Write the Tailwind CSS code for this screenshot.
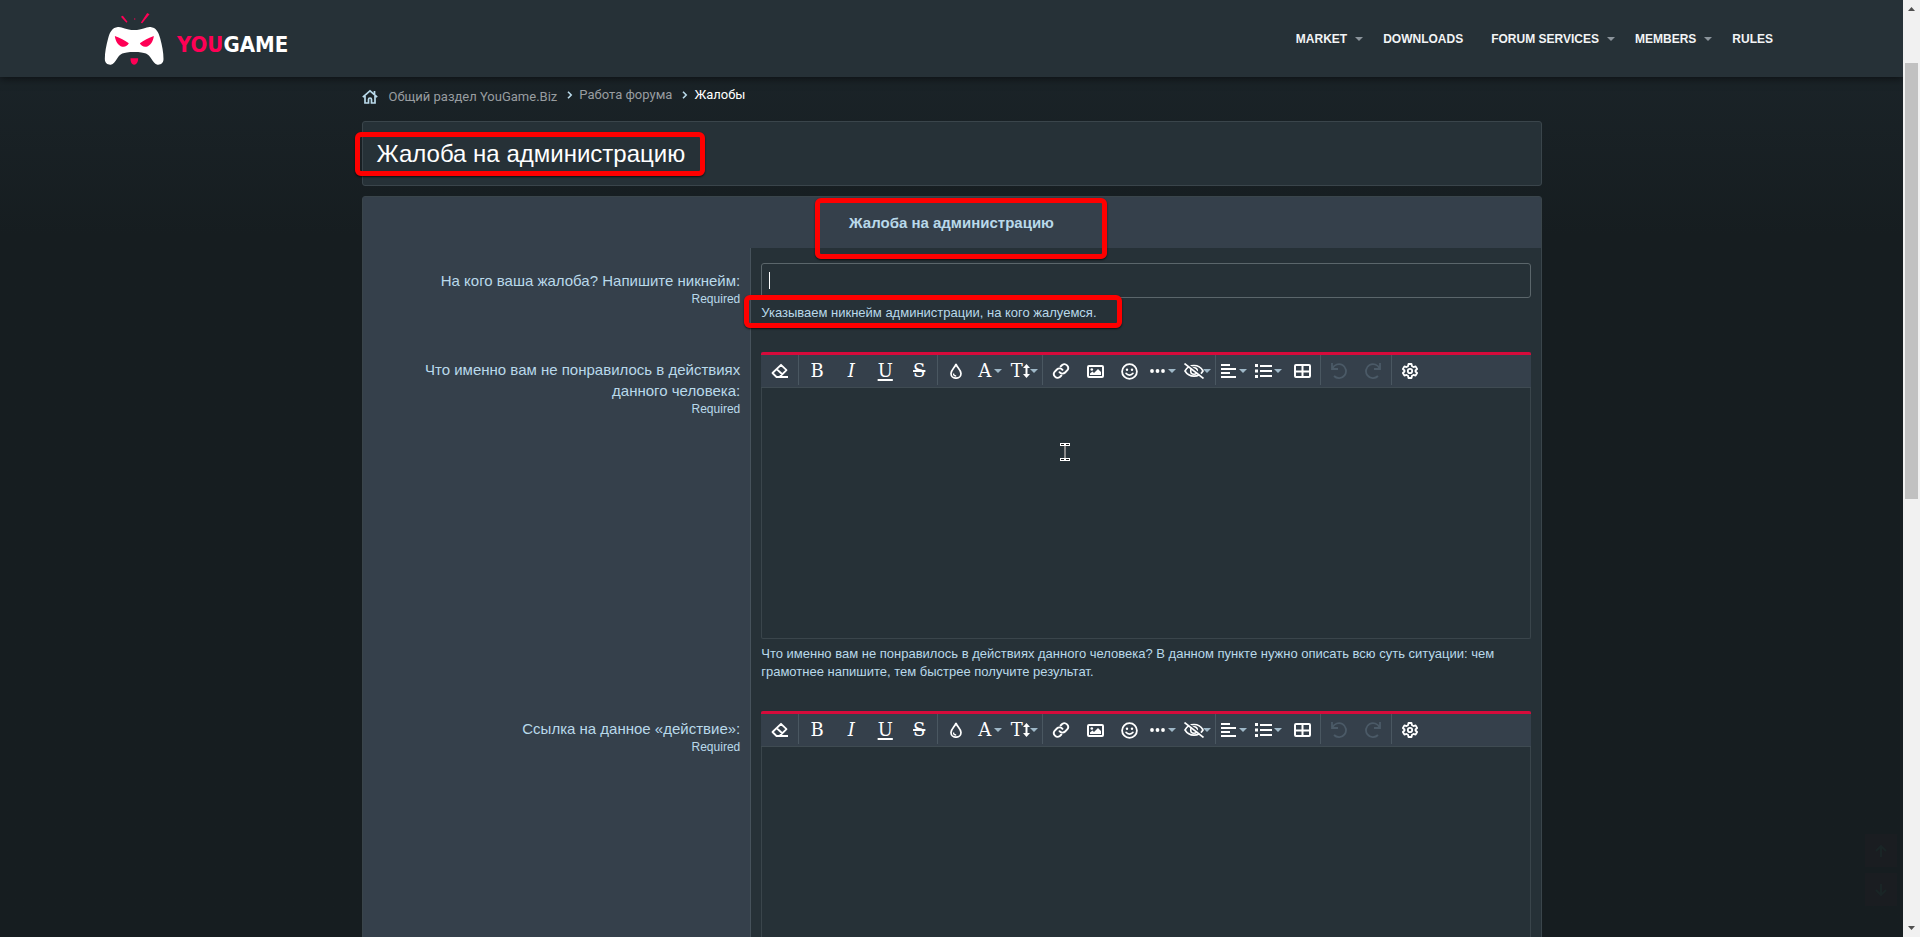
<!DOCTYPE html>
<html lang="ru">
<head>
    <meta charset="UTF-8">
    <meta name="viewport" content="width=device-width, initial-scale=1.0">
    <title>Жалоба на администрацию | YouGame.Biz</title>
    <script src="https://cdn.jsdelivr.net/npm/@tailwindcss/browser@4"></script>
</head>
<body class="flex h-screen overflow-hidden bg-[#161d20] font-['Liberation_Sans',Arial,sans-serif] text-[#b9d9ea]">

    <div class="relative flex-1 h-screen overflow-hidden bg-linear-to-b from-[#1b2429] from-5% to-[#161d20] to-25%">

        <!-- Header -->
        <header class="relative flex items-center justify-between h-[77px] pl-[103px] pr-[120px] bg-[#263137] shadow-[0_2px_8px_rgba(0,0,0,0.5)]">
            <a href="#" class="flex items-center gap-3" aria-label="YouGame">
                <svg class="w-[62px] h-[55px]" viewBox="40 30 185 165">
                    <path fill="#fff" d="M84 78C96 76 106 87 133 87S170 76 182 78C198 80 206 92 211 112C217 134 221 155 221 174C221 187 212 192 203 191C195 190 190 182 183 171C176 160 168 153 133 153S90 160 83 171C76 182 71 190 63 191C54 192 45 187 45 174C45 155 49 134 55 112C60 92 68 80 84 78Z"/>
                    <path fill="#ff0055" d="M75 105C90 110 106 118 117 127C113 135 105 139 97 137C85 134 77 121 75 105ZM192 105C177 110 161 118 150 127C154 135 162 139 170 137C182 134 190 121 192 105ZM122 172H145C145 181 142 191 133 191S122 181 122 172ZM93 47L99 44L113 62L110 65ZM172 36L179 40L157 67L153 65ZM132 54L136 51L136 57Z"/>
                </svg>
                <span class="pt-3 text-[22px] leading-[30px] font-bold font-['Liberation_Sans_Narrow','DejaVu_Sans_Condensed',sans-serif] text-white"><span class="text-[#ff0055]">YOU</span>GAME</span>
            </a>
            <nav class="flex items-center pt-px text-xs font-bold text-[#f2f4f5]">
                <a href="#" class="flex items-center gap-2 px-[10px]">MARKET <svg class="w-2 h-1" viewBox="0 0 8 4"><path fill="#8b949b" d="M0 0h8L4 4z"/></svg></a>
                <a href="#" class="pl-[10px] pr-[18px]">DOWNLOADS</a>
                <a href="#" class="flex items-center gap-2 px-[10px]">FORUM SERVICES <svg class="w-2 h-1" viewBox="0 0 8 4"><path fill="#8b949b" d="M0 0h8L4 4z"/></svg></a>
                <a href="#" class="flex items-center gap-2 px-[10px]">MEMBERS <svg class="w-2 h-1" viewBox="0 0 8 4"><path fill="#8b949b" d="M0 0h8L4 4z"/></svg></a>
                <a href="#" class="px-[10px]">RULES</a>
            </nav>
        </header>

        <main class="w-full max-w-[1180px] mx-auto">

            <!-- Breadcrumbs -->
            <nav class="flex items-center h-[44px] pb-2 font-[Roboto,sans-serif] text-[13px] text-[#989da0]">
                <a href="#" class="flex items-center gap-[11px] pt-1">
                    <svg class="w-4 h-4" viewBox="0 0 16 16" fill="none" stroke="#b9d9ea" stroke-width="1.7"><path d="M.8 8.2L8 1.8l7.200 6.400M12.500 2v3.500M3 7v7h3.500v-3.500a1.500 1.500 0 0 1 3 0V14H13V7"/></svg>
                    Общий раздел YouGame.Biz
                </a>
                <svg class="w-[22px] h-2" viewBox="0 0 22 8" fill="none" stroke="#b9d9ea" stroke-width="1.600"><path d="M11 .8L14.200 4L11 7.200"/></svg>
                <a href="#">Работа форума</a>
                <svg class="w-[22px] h-2" viewBox="0 0 22 8" fill="none" stroke="#b9d9ea" stroke-width="1.600"><path d="M11 .8L14.200 4L11 7.200"/></svg>
                <a href="#" class="text-white">Жалобы</a>
            </nav>

            <!-- Page title -->
            <div class="relative h-[65px] px-[14px] pt-4 border border-[#3a454b] rounded-[3px] bg-[#263137]">
                <h1 class="text-2xl text-white">Жалоба на администрацию</h1>
                <div class="absolute -left-2 top-[10px] w-[350px] h-[44px] border-5 border-[#ff0000] rounded-md shadow-[0_1px_2px_rgba(0,0,0,0.7)]"></div>
            </div>

            <!-- Complaint form -->
            <form class="mt-[10px] border border-[#3a454b] rounded-[3px] bg-[#263137]">
                <div class="relative h-[51px] pt-[15px] bg-[#35404b] text-center">
                    <h2 class="text-[15px] leading-[21px] font-bold">Жалоба на администрацию</h2>
                    <div class="absolute left-[452px] top-px w-[292px] h-[61px] border-5 border-[#ff0000] rounded-md shadow-[0_1px_2px_rgba(0,0,0,0.7)]"></div>
                </div>

                <div class="flex">
                    <div class="w-[33%] pt-[22px] pr-[10px] pl-10 bg-[#35404b] border-r border-[#46525b] text-right">
                        <label for="nickname" class="block text-[15px] leading-[21px]">На кого ваша жалоба? Напишите никнейм:</label>
                        <p class="text-xs">Required</p>
                    </div>
                    <div class="relative flex-1 px-[10px] pt-[15px] pb-[15px]">
                        <div class="relative">
                            <input id="nickname" type="text" class="block w-full h-[35px] px-2 border border-[#5b666b] rounded-[3px] bg-transparent text-[15px] text-white outline-none">
                            <span class="absolute left-2 top-[9px] w-px h-[17px] bg-white"></span>
                        </div>
                        <p class="mt-[6px] text-[13px] leading-[18px]">Указываем никнейм администрации, на кого жалуемся.</p>
                        <div class="absolute -left-[7px] top-[47px] w-[378px] h-[33px] border-5 border-[#ff0000] rounded-md shadow-[0_1px_2px_rgba(0,0,0,0.7)]"></div>
                    </div>
                </div>

                <div class="flex">
                    <div class="w-[33%] pt-[22px] pr-[10px] pl-10 bg-[#35404b] border-r border-[#46525b] text-right">
                        <label for="reason" class="block text-[15px] leading-[21px]">Что именно вам не понравилось в действиях данного человека:</label>
                        <p class="text-xs">Required</p>
                    </div>
                    <div class="flex-1 px-[10px] pt-[15px] pb-[15px]">
                        <div class="relative h-[287px] flex flex-col border border-t-0 border-[#3a454b] rounded-[2px]">
                            <div data-toolbar></div>
                            <textarea id="reason" class="flex-1 w-full p-2 resize-none bg-transparent text-[15px] text-white outline-none"></textarea>
                            <!-- Text cursor -->
                            <svg class="absolute left-[297px] top-[90px] w-3 h-[20px]" viewBox="0 0 12 20">
                                <path fill="#8a8a8a" d="M5 3h2v14H5z"/>
                                <path fill="#fff" d="M1 1h10v3H1zM1 16h10v3H1z"/>
                                <path fill="#111" d="M2 2h3v1H2zM7 2h3v1H7zM2 17h3v1H2zM7 17h3v1H7z"/>
                            </svg>
                        </div>
                        <p class="mt-[6px] text-[13px] leading-[18px]">Что именно вам не понравилось в действиях данного человека? В данном пункте нужно описать всю суть ситуации: чем грамотнее напишите, тем быстрее получите результат.</p>
                    </div>
                </div>

                <div class="flex">
                    <div class="w-[33%] pt-[22px] pr-[10px] pl-10 bg-[#35404b] border-r border-[#46525b] text-right">
                        <label for="link" class="block text-[15px] leading-[21px]">Ссылка на данное «действие»:</label>
                        <p class="text-xs">Required</p>
                    </div>
                    <div class="flex-1 px-[10px] pt-[15px] pb-[15px]">
                        <div class="h-[287px] flex flex-col border border-t-0 border-[#3a454b] rounded-[2px]">
                            <div data-toolbar></div>
                            <textarea id="link" class="flex-1 w-full p-2 resize-none bg-transparent text-[15px] text-white outline-none"></textarea>
                        </div>
                    </div>
                </div>
            </form>
        </main>

        <!-- Scroll to top / bottom -->
        <div class="absolute right-[6px] bottom-[31px] flex flex-col gap-[6px]">
            <button type="button" aria-label="Top" class="flex items-center justify-center w-8 h-[33px] bg-[#1a1d21]">
                <svg class="w-3 h-3" viewBox="0 0 12 12" fill="none" stroke="#1a2526" stroke-width="2"><path d="M6 12V1M1 6l5-5 5 5"/></svg>
            </button>
            <button type="button" aria-label="Bottom" class="flex items-center justify-center w-8 h-[33px] bg-[#1a1d21]">
                <svg class="w-3 h-3" viewBox="0 0 12 12" fill="none" stroke="#1a2526" stroke-width="2"><path d="M6 0v11M1 6l5 5 5-5"/></svg>
            </button>
        </div>
    </div>

    <!-- Scrollbar -->
    <div class="flex flex-col items-center justify-between w-[17px] h-screen py-[7px] bg-[#f1f1f1]">
        <svg class="w-[7px] h-1" viewBox="0 0 7 4"><path fill="#505050" d="M0 4h7L3.500 0z"/></svg>
        <div class="w-[13px] h-[436px] mt-[52px] mb-auto bg-[#c1c1c1]"></div>
        <svg class="w-[7px] h-1" viewBox="0 0 7 4"><path fill="#505050" d="M0 0h7L3.500 4z"/></svg>
    </div>

    <!-- Editor toolbar, shared by all the editors -->
    <template id="toolbar">
        <div class="-mx-px flex h-[36px] px-px border-t-3 border-t-[#d60b3b] border-b border-b-[#3f4b52] rounded-t-[2px] bg-[#35404b] text-white font-['DejaVu_Serif',serif] text-[18px] leading-[28px]">
            <div class="flex px-px pt-[2px] mb-[2px] border-r border-[#4a5761]">
                <button type="button" aria-label="Remove formatting" class="flex items-center justify-center w-[34px]">
                    <svg class="w-[18px] h-4" viewBox="0 0 18 16" fill="none" stroke="currentColor" stroke-width="1.800" stroke-linejoin="round"><path d="M17 14H5.500L1.500 10L10 1.800L15.500 7.200L8.500 14M5.500 6L11.500 11.500"/></svg>
                </button>
            </div>
            <div class="flex px-px pt-[2px] mb-[2px] border-r border-[#4a5761]">
                <button type="button" aria-label="Bold" class="w-[34px]">B</button>
                <button type="button" aria-label="Italic" class="w-[34px] italic">I</button>
                <button type="button" aria-label="Underline" class="w-[34px] underline underline-offset-2 decoration-2">U</button>
                <button type="button" aria-label="Strike" class="w-[34px] line-through decoration-2">S</button>
            </div>
            <div class="flex px-px pt-[2px] mb-[2px] border-r border-[#4a5761]">
                <button type="button" aria-label="Text color" class="flex items-center justify-center w-[34px]">
                    <svg class="w-3 h-4" viewBox="0 0 12 16" fill="none" stroke="currentColor" stroke-width="1.700"><path d="M6 1C5.500 4 1 7 1 10.500a5 4.700 0 0 0 10 0C11 7 6.500 4 6 1Z"/><path d="M3.500 10.500c0 1.500 1 2.500 2.700 2.500" stroke-width="1.300"/></svg>
                </button>
                <button type="button" aria-label="Font family" class="flex items-center justify-center gap-[3px] w-[34px]">A<svg class="w-2 h-1 shrink-0" viewBox="0 0 8 4"><path fill="#9fb8c8" d="M0 0h8L4 4z"/></svg></button>
                <button type="button" aria-label="Font size" class="flex items-center justify-center w-[34px]">T<svg class="w-[7px] h-4 shrink-0" viewBox="0 0 7 16"><path fill="currentColor" d="M3.500 1L7 5H4.500v6H7L3.500 15L0 11h2.500V5H0z"/></svg><svg class="w-2 h-1 shrink-0" viewBox="0 0 8 4"><path fill="#9fb8c8" d="M0 0h8L4 4z"/></svg></button>
            </div>
            <div class="flex px-px pt-[2px] mb-[2px] border-r border-[#4a5761]">
                <button type="button" aria-label="Insert link" class="flex items-center justify-center w-[34px]">
                    <svg class="w-[18px] h-[18px]" viewBox="0 0 24 24" fill="none" stroke="currentColor" stroke-width="2.500" stroke-linecap="round"><path d="M10 13.500a5 5 0 0 0 7.500.5l3-3a5 5 0 0 0-7-7L11.500 6"/><path d="M14 10.500a5 5 0 0 0-7.500-.5l-3 3a5 5 0 0 0 7 7l2-2"/></svg>
                </button>
                <button type="button" aria-label="Insert image" class="flex items-center justify-center w-[34px]">
                    <svg class="w-[17px] h-[13px]" viewBox="0 0 17 13"><rect x="1" y="1" width="15" height="11" rx="1" fill="none" stroke="currentColor" stroke-width="2"/><circle cx="4.800" cy="4.500" r="1.300" fill="currentColor"/><path fill="currentColor" d="M3 10V8.500L5.500 6.500L7 8L11 4L14 7V10Z"/></svg>
                </button>
                <button type="button" aria-label="Smilies" class="flex items-center justify-center w-[34px]">
                    <svg class="w-[17px] h-[17px]" viewBox="0 0 17 17"><circle cx="8.500" cy="8.500" r="7.400" fill="none" stroke="currentColor" stroke-width="1.800"/><circle cx="6" cy="6.800" r="1.200" fill="currentColor"/><circle cx="11" cy="6.800" r="1.200" fill="currentColor"/><path d="M5 10.300c1.700 2.400 5.300 2.400 7 0" fill="none" stroke="currentColor" stroke-width="1.600" stroke-linecap="round"/></svg>
                </button>
                <button type="button" aria-label="Insert" class="flex items-center justify-center gap-[3px] w-[34px]">
                    <svg class="w-[15px] h-1" viewBox="0 0 15 4" fill="currentColor"><circle cx="2" cy="2" r="1.900"/><circle cx="7.500" cy="2" r="1.900"/><circle cx="13" cy="2" r="1.900"/></svg>
                    <svg class="w-2 h-1" viewBox="0 0 8 4"><path fill="#9fb8c8" d="M0 0h8L4 4z"/></svg>
                </button>
                <button type="button" aria-label="Spoiler" class="flex items-center justify-center w-[34px]">
                    <svg class="w-[20px] h-4 shrink-0" viewBox="0 0 20 16" fill="none" stroke="currentColor" stroke-width="1.600"><path d="M1 8c4-7.300 14-7.300 18 0c-4 6.800-14 6.800-18 0Z"/><circle cx="10" cy="8" r="3.300"/><path stroke="#35404b" d="M2.500 .5L20 14"/><path d="M.5 .5L19.500 15.500"/></svg>
                    <svg class="-ml-px w-2 h-1 shrink-0" viewBox="0 0 8 4"><path fill="#9fb8c8" d="M0 0h8L4 4z"/></svg>
                </button>
            </div>
            <div class="flex px-px pt-[2px] mb-[2px] border-r border-[#4a5761]">
                <button type="button" aria-label="Align" class="flex items-center justify-center gap-[3px] w-[34px]">
                    <svg class="w-[15px] h-[14px]" viewBox="0 0 15 14" fill="currentColor"><path d="M0 0h9v2H0zM0 4h15v2H0zM0 8h9v2H0zM0 12h15v2H0z"/></svg>
                    <svg class="w-2 h-1" viewBox="0 0 8 4"><path fill="#9fb8c8" d="M0 0h8L4 4z"/></svg>
                </button>
                <button type="button" aria-label="List" class="flex items-center justify-center gap-[2px] w-[34px]">
                    <svg class="w-[17px] h-[14px]" viewBox="0 0 17 14" fill="currentColor"><path d="M0 0h3v3H0zM0 5.500h3v3H0zM0 11h3v3H0zM5 1h12v2H5zM5 6h12v2H5zM5 11h12v2H5z"/></svg>
                    <svg class="w-2 h-1" viewBox="0 0 8 4"><path fill="#9fb8c8" d="M0 0h8L4 4z"/></svg>
                </button>
                <button type="button" aria-label="Insert table" class="flex items-center justify-center w-[34px]">
                    <svg class="w-[17px] h-[14px]" viewBox="0 0 17 14" fill="none" stroke="currentColor" stroke-width="2"><rect x="1" y="1" width="15" height="12" rx="1"/><path d="M8.500 1v12M1 7.500h15"/></svg>
                </button>
            </div>
            <div class="flex px-px pt-[2px] mb-[2px] border-r border-[#4a5761] text-[#4b5a67]">
                <button type="button" aria-label="Undo" class="flex items-center justify-center w-[34px]">
                    <svg class="w-4 h-4" viewBox="0 0 16 16" fill="none" stroke="currentColor" stroke-width="1.800"><path d="M1 0v6h6M1.500 5.500A7 7 0 1 1 3 13"/></svg>
                </button>
                <button type="button" aria-label="Redo" class="flex items-center justify-center w-[34px]">
                    <svg class="w-4 h-4" viewBox="0 0 16 16" fill="none" stroke="currentColor" stroke-width="1.800"><path d="M15 0v6H9M14.500 5.500A7 7 0 1 0 13 13"/></svg>
                </button>
            </div>
            <div class="flex px-px pt-[2px] mb-[2px]">
                <button type="button" aria-label="Toggle BB code" class="flex items-center justify-center w-[34px]">
                    <svg class="w-4 h-4" viewBox="0 0 16 16" fill="none" stroke="currentColor" stroke-width="1.800" stroke-linejoin="round"><path d="M6.500 1h3l.5 2.200l1.500.9l2.100-.7l1.500 2.600L13.500 7.500v1l1.600 1.500l-1.500 2.600l-2.100-.7l-1.500.9L9.500 15h-3L6 12.800l-1.500-.9l-2.100.7L.9 10l1.600-1.500v-1L.9 6l1.500-2.600l2.100.7L6 3.200Z"/><circle cx="8" cy="8" r="2.200"/></svg>
                </button>
            </div>
        </div>
    </template>

    <script>
        const toolbar = document.getElementById('toolbar');

        // Put a copy of the toolbar into each editor
        document.querySelectorAll('[data-toolbar]').forEach(slot => {
            slot.appendChild(toolbar.content.cloneNode(true));
        });
    </script>
</body>
</html>
